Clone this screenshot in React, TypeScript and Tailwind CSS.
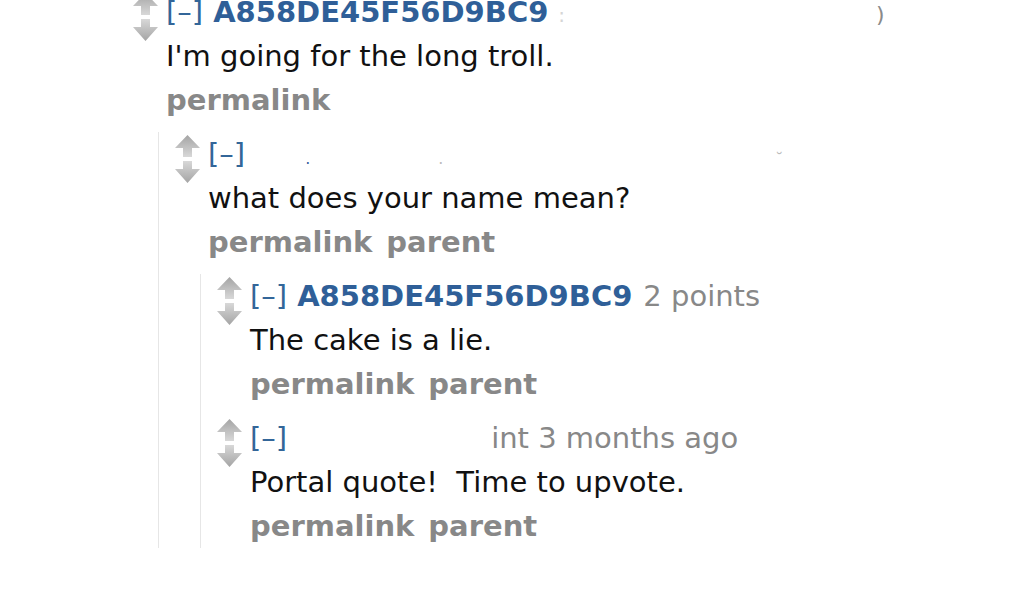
import type { ReactNode } from 'react';

function VoteArrows() {
    return (
        <svg width="25" height="48" viewBox="0 0 25 48" className="shrink-0">
            <defs>
                <linearGradient id="upg" x1="0" y1="0" x2="0" y2="1">
                    <stop offset="0" stopColor="#a4a4a4" />
                    <stop offset="1" stopColor="#d8d8d8" />
                </linearGradient>
                <linearGradient id="downg" x1="0" y1="0" x2="0" y2="1">
                    <stop offset="0" stopColor="#d8d8d8" />
                    <stop offset="1" stopColor="#a4a4a4" />
                </linearGradient>
            </defs>
            <path d="M12.5 0 L25 13 L17 13 L17 22 L8 22 L8 13 L0 13 Z" fill="url(#upg)" />
            <path d="M8 26 L17 26 L17 34 L25 34 L12.5 48 L0 34 L8 34 Z" fill="url(#downg)" />
        </svg>
    );
}

type CommentProps = {
    header: ReactNode;
    body: string;
    buttons: string[];
    children?: ReactNode;
};

function Comment({ header, body, buttons, children }: CommentProps) {
    return (
        <div className="mt-[10px] first:mt-0">
            <div className="flex">
                <div className="w-[32px] shrink-0 pt-[3px] -ml-[1px]">
                    <VoteArrows />
                </div>
                <div className="flex-1 ml-[1px]">
                    <div className="h-[44px] leading-[44px] whitespace-nowrap text-[#888]">
                        {header}
                    </div>
                    <div className="h-[44px] leading-[44px] whitespace-pre text-[#111]">{body}</div>
                    <div className="h-[44px] leading-[44px] whitespace-nowrap font-bold text-[#888] flex gap-[14px]">
                        {buttons.map((b) => (
                            <span key={b}>{b}</span>
                        ))}
                    </div>
                </div>
            </div>
            {children && (
                <div className="ml-[24px] mt-[10px] border-l border-[#e6e6e6] pl-[17px] -mb-[4px]">
                    {children}
                </div>
            )}
        </div>
    );
}

function Collapse() {
    return <span className="text-[#336699] mr-[10px]">[–]</span>;
}

function Author({ name }: { name: string }) {
    return <span className="font-bold text-[#2f5f98]">{name}</span>;
}

export default function App() {
    return (
        <div className="w-[1024px] h-[607px] overflow-hidden bg-white font-['DejaVu_Sans',sans-serif] text-[29px]">
            <div className="ml-[134px] -mt-[10px]">
                <Comment
                    header={
                        <>
                            <Collapse />
                            <Author name="A858DE45F56D9BC9" />
                            <span className="ml-[10px] text-[#d5d5d5] text-[20px]">:</span>
                            <span className="ml-[311px] text-[#8a8a8a] text-[22px]">)</span>
                        </>
                    }
                    body="I'm going for the long troll."
                    buttons={['permalink']}
                >
                    <Comment
                        header={
                            <>
                                <Collapse />
                                <span className="ml-[50px] text-[#3a5f9f] text-[16px]">.</span>
                                <span className="ml-[128px] text-[#bbb] text-[16px]">.</span>
                                <span className="ml-[332px] text-[#bbb] text-[16px]">˘</span>
                            </>
                        }
                        body="what does your name mean?"
                        buttons={['permalink', 'parent']}
                    >
                        <Comment
                            header={
                                <>
                                    <Collapse />
                                    <Author name="A858DE45F56D9BC9" />
                                    <span className="ml-[11px]">2 points</span>
                                </>
                            }
                            body="The cake is a lie."
                            buttons={['permalink', 'parent']}
                        />
                        <Comment
                            header={
                                <>
                                    <Collapse />
                                    <span className="ml-[194px]">int 3 months ago</span>
                                </>
                            }
                            body="Portal quote!  Time to upvote."
                            buttons={['permalink', 'parent']}
                        />
                    </Comment>
                </Comment>
            </div>
        </div>
    );
}
